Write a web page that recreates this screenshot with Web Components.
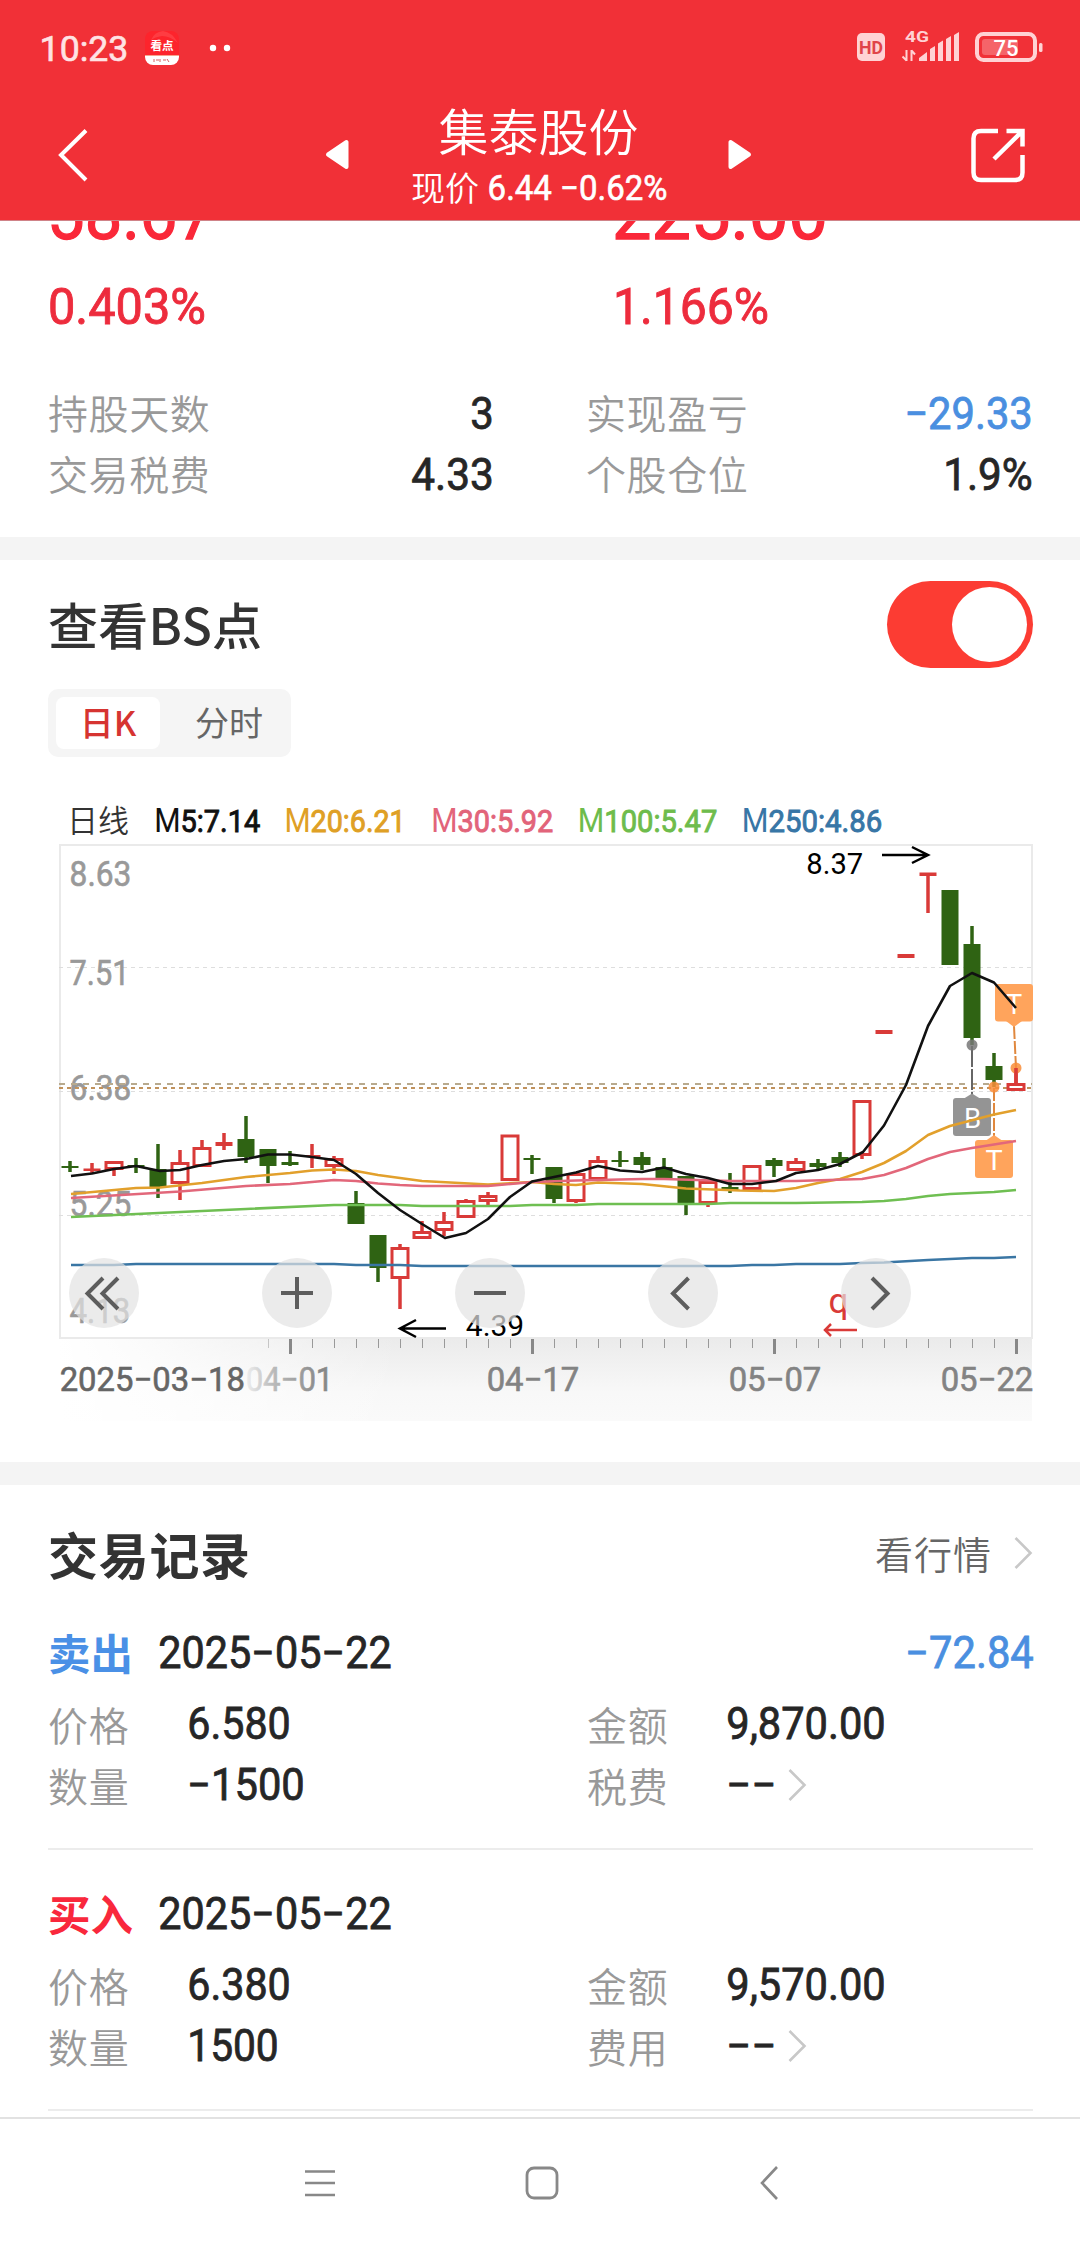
<!DOCTYPE html>
<html lang="zh-CN">
<head>
<meta charset="utf-8">
<title>集泰股份</title>
<style>
html,body{margin:0;padding:0;background:#fff}
body{width:1080px;height:2248px;overflow:hidden;font-family:"Noto Sans CJK SC",sans-serif;color:#333}
</style>
</head>
<body>
<trade-app></trade-app>
<script>
const define = (name, html) => customElements.define(name, class extends HTMLElement {
  constructor() { super(); this.attachShadow({mode: 'open'}).innerHTML = html; }
});

// Condensed figures: text scaled to a given ink width, box height equals cap height
customElements.define('fit-text', class extends HTMLElement {
  connectedCallback() {
    const w = +this.getAttribute('w'), cap = +this.getAttribute('cap');
    const size = cap / 0.711, b = size * 0.04;
    const root = this.shadowRoot || this.attachShadow({mode: 'open'});
    root.innerHTML = `<style>:host{display:block;flex:none}svg{display:block;overflow:visible}
      text{font-family:Roboto,sans-serif;font-weight:400;fill:currentColor;stroke:currentColor;stroke-width:${size * 0.018}}</style>
      <svg width="${w}" height="${cap}"><text x="${-b}" y="${cap}" font-size="${size}" textLength="${w + 2 * b}" lengthAdjust="spacingAndGlyphs">${this.getAttribute('value')}</text></svg>`;
  }
});

define('status-bar', `<style>
:host{display:flex;height:94px;box-sizing:border-box;padding:0 37px 0 41px;align-items:center;justify-content:space-between;color:#ffe3e4}
.l{display:flex;align-items:center;padding-top:2px}
svg{display:block}
.app{margin-left:18px}.dots{margin-left:30px}
</style>
<div class="l"><fit-text value="10:23" w="86" cap="25"></fit-text>
<svg class="app" width="34" height="34"><defs><clipPath id="c"><rect width="34" height="34" rx="8"/></clipPath></defs>
<g clip-path="url(#c)"><rect width="34" height="34" fill="#fd242c"/><path d="M6 9Q9 1 18 0Q27 1 33 12Q25 5 17 5Q10 6 6 9" fill="#ff5357" opacity=".5"/><rect y="24.7" width="34" height="10" fill="#fff"/><rect y="24" width="34" height="1" fill="#f6a48c"/></g>
<text x="5.5" y="19" font-size="11.6" font-weight="700" fill="#fff" font-family="Noto Sans CJK SC">看点</text>
<path d="M9 28v3M11 29h3M15 28v3M18 29h3M22 28l2 3" stroke="#d86060" stroke-width="1"/></svg>
<svg class="dots" width="22" height="8"><circle cx="4" cy="4" r="3.2" fill="#fff"/><circle cx="18" cy="4" r="3.2" fill="#fff"/></svg></div>
<svg width="187" height="34" viewBox="857 30 187 34" fill="#ffd2d4" font-family="Roboto">
<rect x="858" y="33" width="28" height="28" rx="5"/><text x="860" y="54" font-size="18" font-weight="700" fill="#e04449" textLength="24" lengthAdjust="spacingAndGlyphs">HD</text>
<text x="906" y="42" font-size="15" font-weight="700" textLength="24" lengthAdjust="spacingAndGlyphs">4G</text>
<path d="M907.500 50v11M903.500 56.500l4 4M912.500 61v-11M912.500 50.500l3.500 4" stroke="#ffd2d4" stroke-width="2" fill="none"/>
<path d="M920 61v-3l8-6v9zM931 61V49l5-3v15zM939 61V43.500l5-3V61zM947 61V39l5-3v25zM955 61V35l5-3v29z"/>
<rect x="978" y="34" width="58" height="26" rx="6.500" fill="none" stroke="#ffd2d4" stroke-width="4"/>
<rect x="983" y="39" width="36" height="16" rx="3" opacity=".32"/><rect x="1040" y="43" width="3.500" height="9" rx="1.500"/>
<text x="994.500" y="56" font-size="22.500" font-weight="500" fill="#fff" textLength="25" lengthAdjust="spacingAndGlyphs">75</text></svg>`);

define('stock-header', `<style>
:host{display:flex;height:126px;align-items:flex-start;color:#fff;padding:0 54px 0 56px}
svg{display:block}
.side{margin-top:33px}
.mid{display:flex;align-items:flex-start;margin:0 auto 0 235px}
.tri{margin-top:45px}
.t{display:flex;flex-direction:column;align-items:center;width:257px}
h1{margin:5px 0 0;font-weight:350;font-size:50px;line-height:60px;height:60px;white-space:nowrap}
.sub{display:flex;align-items:center;gap:10px;font-size:34px;font-weight:350;line-height:54px;height:54px;margin-top:1px;white-space:nowrap}
.left{margin-right:60px}.right{margin-left:60px}
</style>
<svg class="side" width="34" height="56" viewBox="56 127 34 56"><path d="M86 130.500 61 155 86 180" fill="none" stroke="#fff" stroke-width="4"/></svg>
<div class="mid">
<svg class="tri left" width="25" height="31" viewBox="325 139 25 31"><path d="M328 154.500 346.500 142v25z" fill="#fff" stroke="#fff" stroke-width="4" stroke-linejoin="round"/></svg>
<div class="t"><h1>集泰股份</h1><div class="sub"><span>现价</span><fit-text value="6.44 −0.62%" w="177" cap="25"></fit-text></div></div>
<svg class="tri right" width="25" height="31" viewBox="727 139 25 31"><path d="M749 154.500 730.500 142v25z" fill="#fff" stroke="#fff" stroke-width="4" stroke-linejoin="round"/></svg>
</div>
<svg class="side" width="56" height="56" viewBox="970 127 56 56" fill="none" stroke="#fff" stroke-width="4.500"><path d="M998 131h-17q-7.500 0-7.500 7.500v34q0 7.500 7.500 7.500h34q7.500 0 7.500-7.500V155M1006.500 131h16v15.500M1022 131.500 994 159"/></svg>`);

customElements.define('stat-row', class extends HTMLElement {
  connectedCallback() {
    const a = n => this.getAttribute(n);
    this.attachShadow({mode: 'open'}).innerHTML = `<style>:host{display:flex;height:61px;align-items:center;justify-content:space-between}
    span{font-size:40px;letter-spacing:.6px;line-height:61px;color:#999;font-weight:350}fit-text{color:${a('color') || '#262626'}}</style>
    <span>${a('label')}</span><fit-text value="${a('value')}" w="${a('w')}" cap="31.5"></fit-text>`;
  }
});

define('position-summary', `<style>
:host{display:block;height:317px;overflow:hidden;box-sizing:border-box;border-top:1px solid #cf8388;padding:0 47px 0 48px}
.pair{display:grid;grid-template-columns:565px auto;padding-left:2px;color:#fa2839}
.big{margin-top:-34px}.pct{margin-top:49px;color:#ed2c3d}
.stats{display:grid;grid-template-columns:444px 445px;column-gap:94px;margin-top:58px}
</style>
<div class="pair big"><fit-text value="58.67" w="162" cap="52"></fit-text><fit-text value="225.00" w="210" cap="52"></fit-text></div>
<div class="pair pct"><fit-text value="0.403%" w="154" cap="36"></fit-text><fit-text value="1.166%" w="152" cap="36"></fit-text></div>
<div class="stats">
<stat-row label="持股天数" value="3" w="20"></stat-row><stat-row label="实现盈亏" value="−29.33" w="125" color="#4a8fe0"></stat-row>
<stat-row label="交易税费" value="4.33" w="79"></stat-row><stat-row label="个股仓位" value="1.9%" w="86"></stat-row></div>`);

define('bs-toggle', `<style>:host{display:flex;justify-content:flex-end;align-items:center;width:146px;height:87px;box-sizing:border-box;padding:6px;border-radius:44px;background:#fc3c33}
i{width:75px;height:75px;border-radius:50%;background:#fff}</style><i></i>`);

define('period-tabs', `<style>:host{display:flex;width:243px;height:68px;box-sizing:border-box;padding:8px;border-radius:10px;background:#f5f5f5}
span{flex:none;width:104px;border-radius:8px;font-size:34px;line-height:50px;text-align:center;color:#666}
.on{background:#fff;color:#d63431;font-weight:500;margin-right:17px}</style><span class="on">日K</span><span>分时</span>`);

customElements.define('kline-chart', class extends HTMLElement {
  connectedCallback() {
    const G = '#2f6313', R = '#d93a38';
    // kind, body top, body bottom, wick top, wick bottom
    const C = ['g 1166 1168 1161 1172','r 1168.500 1171 1163 1174','h 1161 1170 1161 1176','g 1165 1167 1158 1173','g 1169 1187 1144 1198','h 1162 1184 1150 1200','h 1147 1167 1140 1167','r 1142 1146 1133 1150','g 1139 1157 1116 1163','g 1149 1166 1149 1183','g 1162 1165 1151 1166','r 1155 1157 1144 1168','h 1158 1167 1156 1174','g 1203 1224 1191 1224','g 1235 1268 1235 1282','h 1247 1279 1244 1309','h 1231 1239 1221 1239','h 1221 1231 1212 1236','h 1200 1218 1199 1218','h 1195 1202 1192 1207','h 1134.500 1181 1134.500 1181','g 1158 1160 1155 1174','g 1167 1199 1167 1203','h 1173 1202 1173 1203','h 1160 1180 1156 1180','g 1160 1162 1151 1167','g 1157 1165 1152 1170','g 1167 1178 1158 1180','g 1176 1203 1176 1215','h 1181 1204 1181 1207','g 1187 1190 1173 1193','h 1165 1190 1165 1190','g 1160 1166 1158 1177','h 1161 1171 1158 1171','g 1163 1167 1159 1170','g 1157 1163 1152 1167','h 1100 1156 1100 1159','r 1030 1034 1030 1034','r 954 958 954 958','r 872.500 876 874 913','g 890 965 890 965','g 944 1038 926 1045','g 1066 1080 1053 1087','h 1083 1091 1068 1091'];
    const candles = C.map((s, i) => {
      let [k, t, b, wt, wb] = s.split(' '); t = +t; b = +b; wt = +wt; wb = +wb;
      const x = 70 + 22 * i, col = k === 'g' ? G : R;
      let o = '';
      if (wt < t) o += `<path d="M${x} ${wt}V${t + 1}" stroke="${col}" stroke-width="3.500"/>`;
      if (wb > b) o += `<path d="M${x} ${b - 1}V${wb}" stroke="${col}" stroke-width="3.500"/>`;
      if (k === 'h') o += `<rect x="${x - 8}" y="${t + 1.5}" width="16" height="${Math.max(b - t - 3, 3)}" fill="#fff" stroke="${col}" stroke-width="3"/>`;
      else o += `<rect x="${x - 8.5}" y="${t}" width="17" height="${b - t}" fill="${col}"/>`;
      return o;
    }).join('');
    const lines = [
      ['#e2a02c','71,1194 136,1188 160,1187.500 202,1183 246,1177 290,1173 312,1170.500 334,1169.500 356,1171 378,1175 422,1181 488,1184.500 532,1182 554,1184 576,1185 598,1182.500 642,1184 686,1188.500 740,1190.500 774,1191 796,1188 818,1183 840,1179 862,1172 884,1163 906,1151 928,1135 950,1126 994,1114.500 1016,1110'],
      ['#e2677a','71,1198 180,1191.500 246,1186 290,1184 334,1180 356,1181 378,1183.500 400,1185 422,1186 488,1186 532,1182 576,1180.500 642,1179 664,1179 730,1181 796,1181 862,1179 884,1175 906,1168 928,1159 950,1152 972,1148 1016,1141'],
      ['#6fbf52','71,1217 246,1209 334,1205 400,1205 422,1206 510,1206 532,1205 576,1205 598,1204 708,1204 730,1203 796,1203 862,1202 884,1201 906,1199 928,1196 950,1194 994,1192 1016,1190'],
      ['#3a76a4','71,1265 114,1265 136,1264 334,1264 356,1265 400,1265 422,1266 730,1266 752,1265 774,1265 796,1264 840,1264 862,1263 884,1262.500 928,1260 972,1258 994,1258 1016,1257'],
      ['#111','71,1176 92,1173.500 114,1169 136,1166 160,1171 180,1170 202,1165 224,1161 246,1159 268,1154.500 290,1154.500 312,1157 334,1160 356,1174 378,1193 400,1210 422,1224 445,1238 466,1233 488,1219 510,1197 532,1181.500 554,1177 576,1172.500 598,1166 620,1170.500 642,1172 664,1167.500 686,1174 708,1178 730,1184 752,1184 776,1181 796,1173 818,1170 840,1164 863,1152 884,1125.500 906,1085 928,1026 950,986 972,973 994,982.500 1016,1008']
    ].map(([c, p]) => `<polyline points="${p}" fill="none" stroke="${c}" stroke-width="2.600" stroke-linejoin="round"/>`).join('');
    const T = (s, x, x2, y, cap, fill, sw = .018) => {
      const z = cap / .711, b = z * .04;
      return `<text x="${x - b}" y="${y}" font-size="${z}" fill="${fill}" stroke="${fill}" stroke-width="${z * sw}" textLength="${x2 - x + 2 * b}" lengthAdjust="spacingAndGlyphs">${s}</text>`;
    };
    const legend = [['5:7.14',155.5,259,'#111'],['20:6.21',285.7,404.5,'#dfa025'],['30:5.92',432.5,552,'#e2647a'],['100:5.47',579,716,'#6ebc4c'],['250:4.86',743,881,'#3876a6']]
      .map(([s, a, b, c]) => T(`<tspan stroke="none" font-size="33">M</tspan>${s}`, a, b, 832, 22.5, c, .03)).join('');
    let ticks = '';
    for (let x = 268.5; x < 1010; x += 22) ticks += `<path d="M${x} 1339V1348" stroke="#999" opacity="${x < 270 ? .5 : 1}"/>`;
    for (const x of [290.5, 532.5, 774.5, 1016.5]) ticks += `<path d="M${x} 1339V1354" stroke="#888" stroke-width="3"/>`;
    const icons = [[104,'M103 1278 87.500 1293.500 103 1309M118 1278 102.500 1293.500 118 1309'],[297,'M281 1293H313M297 1277V1309'],[490,'M474 1293H506'],[683,'M688.500 1278 673 1293.500 688.500 1309'],[876,'M872 1278 887.500 1293.500 872 1309']]
      .map(([x, d]) => `<circle cx="${x}" cy="1293" r="35" fill="#e3e3e3" fill-opacity=".7"/><path d="${d}" fill="none" stroke="#5d5d5d" stroke-width="4"/>`).join('');
    this.attachShadow({mode: 'open'}).innerHTML = `<style>:host{display:block}svg{display:block}</style>
<svg width="1080" height="660" viewBox="0 780 1080 660" font-family="Roboto,sans-serif">
<defs><linearGradient id="v" x2="0" y2="1"><stop stop-color="#ebebeb"/><stop offset=".65" stop-color="#f8f8f8"/><stop offset="1" stop-color="#fafafa"/></linearGradient>
<linearGradient id="f"><stop stop-color="#fff"/><stop offset=".25" stop-color="#fff" stop-opacity=".8"/><stop offset="1" stop-color="#fff" stop-opacity="0"/></linearGradient>
<linearGradient id="d" gradientUnits="userSpaceOnUse" x1="247" x2="320" y1="0" y2="0"><stop stop-color="#ececec"/><stop offset=".35" stop-color="#bbb"/><stop offset="1" stop-color="#888"/></linearGradient></defs>
<rect x="60" y="1339" width="972" height="82" fill="url(#v)"/><rect x="59" y="1339" width="341" height="83" fill="url(#f)"/>
<text x="67" y="832" font-size="31" fill="#333" font-weight="350" font-family="Noto Sans CJK SC">日线</text>${legend}
<rect x="60" y="845" width="972" height="493" fill="none" stroke="#eaeaea" stroke-width="2"/>
<path d="M59 967.500H1032M59 1091.500H1032M59 1215.500H1032" stroke="#dedede" stroke-dasharray="4 4"/>
${T('8.63',71,130,886.3,25,'#999')}${T('7.51',71,128,985,25,'#999')}${T('6.38',71,130,1100,25,'#999')}${T('5.25',71,130,1215.7,25,'#999')}${T('4.13',71,129,1323,25,'#999')}
<path d="M59 1084H1032" stroke="#b8aa8e" stroke-width="2" stroke-dasharray="6 6"/><path d="M59 1088H1032" stroke="#c1925c" stroke-width="2" stroke-dasharray="4 4"/>
${candles}
<g stroke-width="2"><path d="M972 1046V1094" stroke="#666" stroke-dasharray="21 2"/><path d="M994 1088V1136M1014 1026 1016 1068" stroke="#e0883e" stroke-dasharray="13 2"/></g>
<circle cx="972" cy="1045" r="5.500" fill="#777" opacity=".85"/><circle cx="994" cy="1087" r="5.500" fill="#f98d38" opacity=".85"/><circle cx="1016" cy="1068" r="5.500" fill="#f98d38" opacity=".85"/><path d="M1016 1068V1083" stroke="${R}" stroke-width="3.500"/>
<rect x="953" y="1098" width="38" height="38" rx="3" fill="#949494"/><path d="M964 1098.500 972 1093.500 980 1098.500z" fill="#949494"/>
<g fill="#ffa45c"><rect x="995" y="984" width="38" height="37.500" rx="3"/><path d="M1006 1021 1014 1027 1022 1021z"/><rect x="975" y="1140" width="38" height="38" rx="3"/><path d="M986 1140.500 994 1135 1002 1140.500z"/></g>
${T('B',965,980,1128,19.5,'#fff',0)}${T('T',1007,1021,1014,19.5,'#fff',0)}${T('T',986.5,1001.5,1170,19.5,'#fff',0)}
${lines}
${T('8.37',807.5,862,874,21,'#000',0)}${T('4.39',467,523,1336,21,'#000',0)}
<g fill="none" stroke="#000" stroke-width="2.500"><path d="M882 855H927M912 847 928 855 912 863M446 1328.500H401M416 1320 400 1328.500 416 1337"/></g>
<text x="828.500" y="1313" font-size="35" fill="${R}" font-weight="400">q</text><path d="M857 1330H825M831 1324 825 1330 831 1336" fill="none" stroke="${R}" stroke-width="2.500"/>
${icons}${ticks}
${T('2025−03−18',61,243.5,1390.7,24,'#666')}${T('04−01',247,332,1390.7,24,'url(#d)')}${T('04−17',488,578,1390.7,24,'#838383')}${T('05−07',730,820,1390.7,24,'#838383')}${T('05−22',942,1032,1390.7,24,'#838383')}
</svg>`;
  }
});

define('bs-section', `<style>:host{display:block;height:902px}
.h{display:flex;align-items:center;justify-content:space-between;height:129px;padding:0 47px 0 48px}
h2{margin:0 0 3px;font-size:50px;letter-spacing:.3px;line-height:60px;font-weight:500;color:#333}
period-tabs{margin:0 0 23px 48px}</style>
<div class="h"><h2>查看BS点</h2><bs-toggle></bs-toggle></div><period-tabs></period-tabs><kline-chart></kline-chart>`);

define('chevron-icon', `<style>:host{display:block;flex:none}svg{display:block}</style><svg width="19" height="34" fill="none" stroke="#c8c8c8" stroke-width="2.600"><path d="M1.500 2 16.500 17 1.500 32"/></svg>`);

customElements.define('trade-record', class extends HTMLElement {
  connectedCallback() {
    const a = n => this.getAttribute(n);
    this.attachShadow({mode: 'open'}).innerHTML = `<style>
:host{display:block;box-sizing:border-box;height:261px;margin:0 47px 0 48px;padding-top:22px;border-bottom:2px solid #ececec}
.top{display:flex;height:82px;align-items:center;color:#262626}
b{width:112px;font-size:42.5px;line-height:60px;color:${a('color')}}
.amt{margin-left:auto;margin-right:1px;color:#4a8fe0}
.g{display:grid;grid-template-columns:141px 398px 141px auto;grid-auto-rows:61px;align-items:center;color:#262626}
span{font-size:40px;letter-spacing:.8px;line-height:60px;color:#999;font-weight:350}
.v{display:flex;align-items:center;gap:13px}
</style><div class="top"><b>${a('side')}</b><fit-text value="2025−05−22" w="230" cap="31"></fit-text>${a('amount') ? `<fit-text class="amt" value="${a('amount')}" w="125" cap="31"></fit-text>` : ''}</div>
<div class="g"><span>价格</span><fit-text value="${a('price')}" w="100" cap="31"></fit-text><span>金额</span><fit-text value="${a('total')}" w="156" cap="31"></fit-text>
<span>数量</span><fit-text value="${a('qty')}" w="${a('qw')}" cap="31"></fit-text><span>${a('fee')}</span><div class="v"><fit-text value="−−" w="47" cap="31"></fit-text><chevron-icon></chevron-icon></div></div>`;
  }
});

define('trade-list', `<style>:host{display:block;height:632px;overflow:hidden}
.h{display:flex;box-sizing:border-box;height:104px;padding:32px 47px 0 48px;align-items:center;justify-content:space-between}
h2{margin:0;font-size:50px;letter-spacing:.7px;line-height:70px;font-weight:700;color:#333}
a{display:flex;align-items:center;gap:22px;font-size:38px;letter-spacing:1px;line-height:70px;font-weight:350;color:#666}
</style><div class="h"><h2>交易记录</h2><a>看行情<chevron-icon></chevron-icon></a></div>
<trade-record side="卖出" color="#4a90e6" amount="−72.84" price="6.580" total="9,870.00" qty="−1500" qw="114" fee="税费"></trade-record>
<trade-record side="买入" color="#f9283c" price="6.380" total="9,570.00" qty="1500" qw="88" fee="费用"></trade-record>`);

define('system-nav', `<style>:host{display:flex;box-sizing:border-box;height:131px;border-top:2px solid #e2e2e2;padding:0 301px 1px 304px;justify-content:space-between;align-items:center}
svg{display:block}.home{margin-right:12px}</style>
<svg width="32" height="34" stroke="#888" stroke-width="2.600"><path d="M1 5.500H31M1 17H31M1 29H31"/></svg>
<svg class="home" width="34" height="34" fill="none" stroke="#888" stroke-width="2.800"><rect x="2" y="2" width="30" height="30" rx="7"/></svg>
<svg width="20" height="34" fill="none" stroke="#888" stroke-width="2.600"><path d="M18 1 3 17 18 33"/></svg>`);

define('trade-app', `<style>:host{display:flex;flex-direction:column;width:1080px;height:2248px;background:#fff}
.red{background:#f13037}.gap{height:23px;background:#f4f4f4;flex:none}</style>
<div class="red"><status-bar></status-bar><stock-header></stock-header></div>
<position-summary></position-summary><div class="gap"></div><bs-section></bs-section><div class="gap"></div><trade-list></trade-list><system-nav></system-nav>`);
</script>
</body>
</html>
